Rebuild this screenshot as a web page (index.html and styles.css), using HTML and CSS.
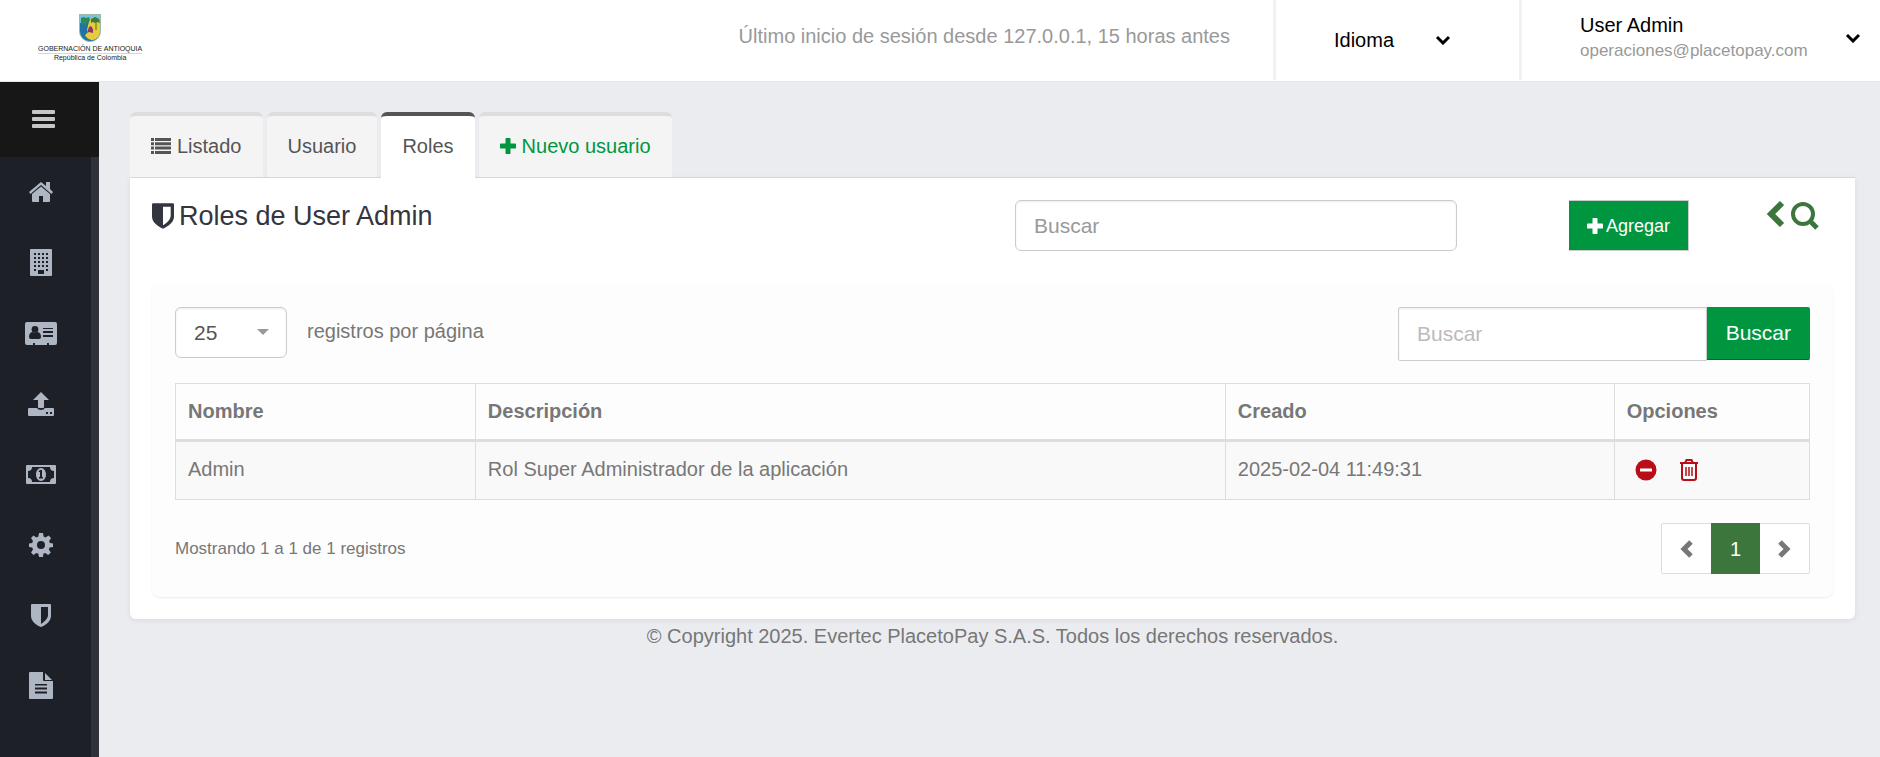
FILE: index.html
```html
<!DOCTYPE html>
<html lang="es">
<head>
<meta charset="utf-8">
<title>Roles de User Admin</title>
<link rel="stylesheet" href="styles.css">
</head>
<body>
<header class="topbar">
  <a class="brand" href="#" aria-label="Gobernación de Antioquia">
    <svg class="crest" viewBox="0 0 22 28" aria-hidden="true">
      <path d="M0 0h22v17c0 6-5 11-11 11S0 23 0 17z" fill="#9fb9a8"/>
      <path d="M1 1h20v16c0 5-4 10-10 10S1 22 1 17z" fill="#1f74a5"/>
      <path d="M1 1h20v6L10 6 1 9z" fill="#79c3dc"/>
      <path d="M13 4c3-1 6 0 8 3v10c0 5-3 8-7 9-3 0-7-2-8-5 2-1 3-3 2-5 1-3 1-9 5-12z" fill="#e6cb3c"/>
      <path d="M2 4l3-1 2 1 3-1 1 3-3 2-1 3-5-1z" fill="#2f8a55"/>
      <path d="M12 5l4-2 4 2 1 4-3-1-2 1-2-1-2 1z" fill="#3d7d34"/>
      <path d="M17 8v8" stroke="#5b6a24" stroke-width="1"/>
      <path d="M10 13l2-1 2 3v4l-4-1-2 1z" fill="#8b3a5c"/>
    </svg>
    <span class="brand-name">GOBERNACIÓN DE ANTIOQUIA</span>
    <span class="brand-sub">República de Colombia</span>
  </a>
  <p class="last-login">Último inicio de sesión desde 127.0.0.1, 15 horas antes</p>
  <button class="menu menu-lang" type="button">
    <span>Idioma</span>
    <svg class="caret" viewBox="0 0 16 10" aria-hidden="true"><path d="M2 2l6 6 6-6"/></svg>
  </button>
  <button class="menu menu-user" type="button">
    <span class="user"><span>User Admin</span><small>operaciones@placetopay.com</small></span>
    <svg class="caret" viewBox="0 0 16 10" aria-hidden="true"><path d="M2 2l6 6 6-6"/></svg>
  </button>
</header>
<div class="shell">
  <nav class="sidebar" aria-label="Principal">
    <button class="toggle" type="button" aria-label="Menú">
      <svg width="23" height="18" viewBox="0 0 23 18"><path d="M1 0h21q1 0 1 1v2q0 1-1 1H1Q0 4 0 3V1q0-1 1-1zM1 7h21q1 0 1 1v2q0 1-1 1H1q-1 0-1-1V8q0-1 1-1zM1 14h21q1 0 1 1v2q0 1-1 1H1q-1 0-1-1v-2q0-1 1-1z"/></svg>
    </button>
    <ul class="links">
      <li><a href="#" aria-label="Inicio"><svg width="24" height="20" viewBox="0 0 24 20"><path d="M12 0l5 4V0h4v7l3 3-1.500 2L12 3 1.500 12 0 10z"/><path d="M12 4.500l9 7.500v7q0 1-1 1h-6v-6h-4v6H4q-1 0-1-1v-7z"/></svg></a></li>
      <li><a href="#" aria-label="Sitios"><svg width="22" height="27" viewBox="0 0 22 27"><path fill-rule="evenodd" d="M1 0h20q1 0 1 1v25q0 1-1 1H1q-1 0-1-1V1q0-1 1-1zM4 4v2h2V4zm4 0v2h2V4zm4 0v2h2V4zm4 0v2h2V4zM4 8v2h2V8zm4 0v2h2V8zm4 0v2h2V8zm4 0v2h2V8zM4 12v2h2v-2zm4 0v2h2v-2zm4 0v2h2v-2zm4 0v2h2v-2zM4 16v2h2v-2zm4 0v2h2v-2zm4 0v2h2v-2zm4 0v2h2v-2zM4 20v2h2v-2zm12 0v2h2v-2zM8 21v4h6v-4z"/></svg></a></li>
      <li><a href="#" aria-label="Identificación"><svg width="32" height="23" viewBox="0 0 32 23"><path fill-rule="evenodd" d="M2 0h28q2 0 2 2v19q0 2-2 2h-6v-2h-2v2H10v-2H8v2H2q-2 0-2-2V2q0-2 2-2zM10 4a3.300 3.300 0 1 0 0 6.800A3.300 3.300 0 1 0 10 4zM7 10q-3 1-3 5 0 2 2 2h8q2 0 2-2 0-4-3-5-3 2-6 0zM18 6v1h10V6zm0 3v2h10V9zm0 4v2h10v-2z"/></svg></a></li>
      <li><a href="#" aria-label="Cargar"><svg width="26" height="24" viewBox="0 0 26 24"><path d="M13 0l8 8h-5v7q0 1-1 1h-4q-1 0-1-1V8H5z"/><path fill-rule="evenodd" d="M1 16h8q1 2 4 2t4-2h8q1 0 1 1v6q0 1-1 1H1q-1 0-1-1v-6q0-1 1-1zm17 4v2h2v-2zm4 0v2h2v-2z"/></svg></a></li>
      <li><a href="#" aria-label="Pagos"><svg width="30" height="19" viewBox="0 0 30 19"><path fill-rule="evenodd" d="M1 0h28q1 0 1 1v17q0 1-1 1H1q-1 0-1-1V1q0-1 1-1zM6 2q0 4-4 4v7q4 0 4 4h18q0-4 4-4V6q-4 0-4-4z"/><path fill-rule="evenodd" d="M15 3c3 0 5 3 5 6.500S18 16 15 16s-5-3-5-6.500S12 3 15 3zm-2 4h1v5h-1v1.500h4V12h-1V5h-1.500L12.500 6z"/></svg></a></li>
      <li><a href="#" aria-label="Configuración"><svg width="24" height="24" viewBox="0 0 24 24"><path fill-rule="evenodd" d="M10 0h4l.6 3.500 2 .9L19.500 2.400l2.600 2.600-2 3 .8 1.900L24 10.500v3.500l-3.400.6-.8 2 2 2.900-2.600 2.500-2.900-2-2 .8L14 24h-4l-.6-3.200-2-.8-2.900 2L2 19.500l2-2.900-.8-2L0 14v-3.500l3.200-.6.8-1.900-2-3 2.500-2.600 2.900 2 2-.9zM12 8a4 4 0 1 0 0 8 4 4 0 1 0 0-8z"/></svg></a></li>
      <li><a href="#" aria-label="Seguridad"><svg width="20" height="23" viewBox="0 0 20 23"><path fill-rule="evenodd" d="M1 0h18q1 0 1 1v11c0 5-5 9-10 11C5 21 0 17 0 12V1q0-1 1-1zm9 3v17c3-2 7-5 7-9V3z"/></svg></a></li>
      <li><a href="#" aria-label="Reportes"><svg width="24" height="27" viewBox="0 0 24 27"><path fill-rule="evenodd" d="M1 0h13v8q0 1 1 1h9v17q0 1-1 1H1q-1 0-1-1V1q0-1 1-1zm5 12v1.500h12V12zm0 3.500v2h12v-2zm0 4v2h12v-2z"/><path d="M16 1l7 7h-7z"/></svg></a></li>
    </ul>
  </nav>
  <main class="content">
    <ul class="tabs">
      <li><a href="#"><svg width="20" height="16" viewBox="0 0 20 16" aria-hidden="true"><path d="M0 0h3v3H0zM4 0h16v3H4zM0 4.300h3v3H0zM4 4.300h16v3H4zM0 8.600h3v3H0zM4 8.600h16v3H4zM0 13h3v3H0zM4 13h16v3H4z"/></svg>Listado</a></li>
      <li><a href="#">Usuario</a></li>
      <li><a class="active" href="#" aria-current="page">Roles</a></li>
      <li><a class="new" href="#"><svg width="16" height="16" viewBox="0 0 16 16" aria-hidden="true"><path d="M6 0h4q.5 0 .5 1v4.500H15q1 0 1 .5v4q0 .5-1 .5h-4.500V15q0 1-.5 1H6q-.5 0-.5-1v-4.500H1q-1 0-1-.5V6q0-.5 1-.5h4.500V1q0-1 .5-1z"/></svg>Nuevo usuario</a></li>
    </ul>
    <section class="card">
      <div class="card-head">
        <h1><svg width="22" height="26" viewBox="0 0 20 23" aria-hidden="true"><path fill-rule="evenodd" d="M1 0h18q1 0 1 1v11c0 5-5 9-10 11C5 21 0 17 0 12V1q0-1 1-1zm9 3v17c3-2 7-5 7-9V3z"/></svg>Roles de User Admin</h1>
        <input class="field rounded" type="text" placeholder="Buscar" aria-label="Buscar rol">
        <div class="tools">
          <button class="add" type="button"><svg width="16" height="16" viewBox="0 0 16 16" aria-hidden="true"><path d="M6 0h4q.5 0 .5 1v4.500H15q1 0 1 .5v4q0 .5-1 .5h-4.500V15q0 1-.5 1H6q-.5 0-.5-1v-4.500H1q-1 0-1-.5V6q0-.5 1-.5h4.500V1q0-1 .5-1z"/></svg>Agregar</button>
          <div class="actions">
            <a href="#" aria-label="Volver"><svg width="19" height="28" viewBox="0 0 19 28"><path d="M16 3L5 14l11 11" fill="none" stroke="currentColor" stroke-width="6"/></svg></a>
            <a href="#" aria-label="Buscar"><svg width="30" height="30" viewBox="0 0 30 30"><path d="M21 22l6 6" stroke="currentColor" stroke-width="5" /><circle cx="13" cy="14" r="10" fill="none" stroke="currentColor" stroke-width="4"/></svg></a>
          </div>
        </div>
      </div>
      <div class="panel">
        <div class="filters">
          <label class="per-page">
            <span class="select-box"><select><option>25</option><option>50</option><option>100</option></select></span>
            registros por página
          </label>
          <form class="search">
            <input class="field" type="search" placeholder="Buscar" aria-label="Buscar en la tabla">
            <button type="button">Buscar</button>
          </form>
        </div>
        <table>
          <colgroup><col class="c-name"><col class="c-desc"><col class="c-date"><col class="c-opts"></colgroup>
          <thead><tr><th>Nombre</th><th>Descripción</th><th>Creado</th><th>Opciones</th></tr></thead>
          <tbody><tr>
            <td>Admin</td><td>Rol Super Administrador de la aplicación</td><td>2025-02-04 11:49:31</td>
            <td><div class="row-actions">
              <button type="button" aria-label="Quitar"><svg width="22" height="22" viewBox="0 0 22 22"><circle cx="11" cy="11" r="10.500" fill="currentColor"/><rect x="5" y="9.500" width="12" height="3" rx=".5" fill="#fff"/></svg></button>
              <button type="button" aria-label="Eliminar"><svg width="20" height="22" viewBox="0 0 20 22"><path d="M1 4h18M6 4l1.500-3h5L14 4M3 4v15q0 2 2 2h10q2 0 2-2V4" fill="none" stroke="currentColor" stroke-width="2"/><path d="M7 8v9M10 8v9M13 8v9" stroke="currentColor" stroke-width="1.500"/></svg></button>
            </div></td>
          </tr></tbody>
        </table>
        <div class="table-foot">
          <p>Mostrando 1 a 1 de 1 registros</p>
          <nav class="pages" aria-label="Paginación">
            <a href="#" aria-label="Anterior"><svg width="13" height="18" viewBox="0 0 13 18"><path d="M11 2L4 9l7 7"/></svg></a>
            <a class="current" href="#" aria-current="page">1</a>
            <a href="#" aria-label="Siguiente"><svg width="13" height="18" viewBox="0 0 13 18"><path d="M2 2l7 7-7 7"/></svg></a>
          </nav>
        </div>
      </div>
    </section>
    <footer>© Copyright 2025. Evertec PlacetoPay S.A.S. Todos los derechos reservados.</footer>
  </main>
</div>
</body>
</html>
```
FILE: styles.css
```css
* { box-sizing: border-box; }
body {
  margin: 0;
  min-height: 100vh;
  display: flex;
  flex-direction: column;
  background: #ebecf0;
  color: #777;
  font: 20px/30px "Liberation Sans", Arial, sans-serif;
}
ul, p, h1 { margin: 0; padding: 0; font-weight: 400; }
ul { list-style: none; }
a { color: inherit; text-decoration: none; }
svg { fill: currentColor; flex: none; display: block; }
button, input, select { font: inherit; margin: 0; border-radius: 0; }
button { border: 0; padding: 0; background: none; color: inherit; cursor: pointer; }

.topbar {
  display: flex;
  align-items: flex-start;
  height: 82px;
  background: #fff;
  border-bottom: 1px solid #e6e6e9;
}
.brand {
  display: flex;
  flex-direction: column;
  align-items: center;
  margin: 14px auto 0 38px;
  color: #222;
  font-size: 7px;
  line-height: 8px;
}
.crest { width: 22px; height: 28px; margin-bottom: 3px; }
.brand-name { border-bottom: 1px solid #c5dfd2; }
.last-login { margin: 21px 43px 0 0; color: #999; }
.menu {
  display: flex;
  align-items: center;
  height: 80px;
  border-left: 3px solid #f1f1f1;
  color: #000;
  text-align: left;
}
.menu-lang { width: 246px; padding-left: 58px; gap: 41px; }
.menu-user { width: 361px; padding: 0 19px 4px 58px; justify-content: space-between; }
.user { display: flex; flex-direction: column; line-height: 25px; }
.user small { font-size: 17px; color: #999; }
.caret { width: 16px; height: 10px; }
.caret path { fill: none; stroke: currentColor; stroke-width: 3; }

.shell { display: flex; flex: 1; }
.sidebar {
  flex: none;
  width: 99px;
  background: #1e2028;
  color: #aeb6c3;
}
.toggle {
  display: flex;
  align-items: center;
  width: 100%;
  height: 75px;
  padding: 0 0 2px 32px;
  background: #171717;
  color: #c6c6c6;
}
.links {
  display: grid;
  grid-auto-rows: 1fr;
  height: 600px;
  padding-bottom: 36px;
  border-right: 8px solid #30313a;
}
.links a {
  display: flex;
  align-items: center;
  justify-content: center;
  height: 100%;
  padding-right: 9px;
}

.content { flex: 1; min-width: 0; padding: 30px 25px 0 31px; }
.tabs { display: flex; gap: 4px; border-bottom: 1px solid #ddd; }
.tabs a {
  display: flex;
  align-items: center;
  gap: 6px;
  height: 65px;
  padding: 0 21px 2px;
  border-top: 4px solid #ddd;
  border-radius: 6px 6px 0 0;
  background: #f4f4f4;
  color: #555;
}
.tabs .active { height: 66px; margin-bottom: -1px; padding-bottom: 3px; border-color: #555; background: #fff; }
.tabs .new { color: #009640; }

.card {
  padding: 22px;
  background: #fff;
  border-radius: 0 0 6px 6px;
  box-shadow: 0 1px 6px rgba(0, 0, 0, .08);
}
.card-head {
  display: grid;
  grid-template-columns: 863fr 442fr 376fr;
  align-items: start;
  margin-bottom: 33px;
}
h1 {
  display: flex;
  align-items: center;
  gap: 5px;
  font-size: 27px;
  line-height: 32px;
  color: #33353f;
}
.field {
  width: 100%;
  height: 51px;
  padding: 0 18px;
  border: 1px solid #ccc;
  background: #fff;
  box-shadow: inset 0 1px 2px rgba(0, 0, 0, .08);
  font-size: 21px;
  color: #555;
}
.field::placeholder { color: #bbb; opacity: 1; }
.rounded { border-radius: 6px; }
.rounded::placeholder { color: #999; }
.tools {
  display: flex;
  align-items: flex-start;
  justify-content: space-between;
  padding: 0 13px 0 112px;
}
.add {
  display: flex;
  align-items: center;
  gap: 3px;
  height: 51px;
  padding: 0 18px;
  border: 1px solid #ccc;
  border-left: 0;
  background: #009640;
  color: #fff;
  font-size: 18px;
}
.actions { display: flex; gap: 5px; color: #3c763d; }

.panel {
  padding: 23px;
  border-radius: 8px;
  background: #fdfdfd;
  box-shadow: 0 1px 2px rgba(0, 0, 0, .08);
}
.filters { display: flex; justify-content: space-between; margin-bottom: 22px; }
.per-page { display: flex; gap: 20px; height: 51px; line-height: 48px; }
.select-box { position: relative; }
.select-box::after {
  content: "";
  position: absolute;
  right: 18px;
  top: 22px;
  border: 6px solid transparent;
  border-top-color: #999;
  border-bottom: 0;
  pointer-events: none;
}
select {
  appearance: none;
  display: block;
  width: 112px;
  height: 51px;
  padding: 0 18px;
  border: 1px solid #ccc;
  border-radius: 6px;
  background: #fff;
  box-shadow: inset 0 1px 2px rgba(0, 0, 0, .08);
  color: #555;
  font-size: 21px;
}
.search { display: flex; align-items: flex-start; width: 412px; }
.search .field { flex: 1; min-width: 0; height: 54px; border-radius: 2px 0 0 2px; }
.search button {
  height: 53px;
  padding: 0 19px;
  border-bottom: 1px solid #006b2e;
  border-radius: 0 2px 2px 0;
  background: #009640;
  color: #fff;
  font-size: 21px;
}

table { width: 100%; table-layout: fixed; border-collapse: collapse; }
.c-name { width: 18.350%; }
.c-desc { width: 45.900%; }
.c-date { width: 23.800%; }
th, td {
  padding: 0 12px 2px;
  border: 1px solid #ddd;
  text-align: left;
}
th { height: 57px; border-bottom-width: 3px; }
td { height: 59px; padding-bottom: 3px; background: #f9f9f9; }
.row-actions { display: flex; align-items: center; gap: 22px; padding: 2px 0 0 8px; color: #b90e17; }

.table-foot { display: flex; justify-content: space-between; align-items: center; margin-top: 23px; }
.table-foot p { font-size: 17px; }
.pages {
  display: flex;
  height: 51px;
  border: 1px solid #ddd;
  border-radius: 2px;
  background: #fff;
}
.pages a { display: flex; align-items: center; justify-content: center; width: 49px; }
.pages .current { margin: -1px 0; background: #3c763d; color: #fff; }
.pages path { fill: none; stroke: currentColor; stroke-width: 5; }
footer { text-align: center; line-height: 34px; }
```
